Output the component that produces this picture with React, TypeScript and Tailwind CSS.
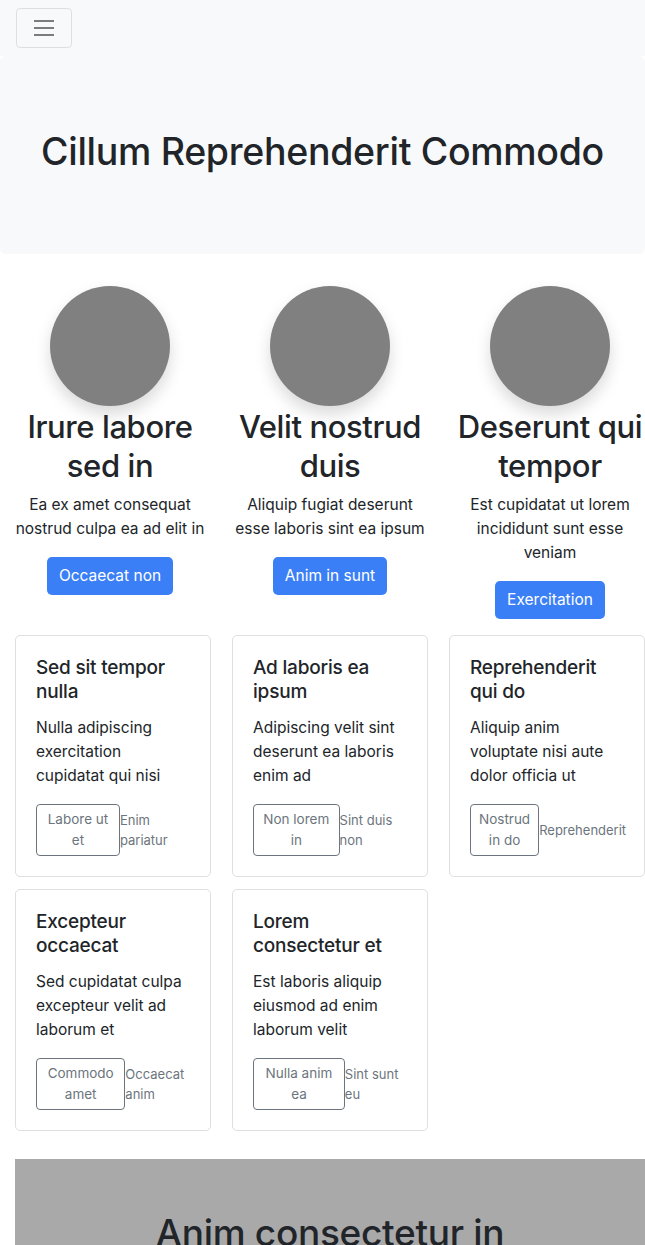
import React from "react";

const features = [
  { title: "Irure labore sed in", text: "Ea ex amet consequat nostrud culpa ea ad elit in", btn: "Occaecat non" },
  { title: "Velit nostrud duis", text: "Aliquip fugiat deserunt esse laboris sint ea ipsum", btn: "Anim in sunt" },
  { title: "Deserunt qui tempor", text: "Est cupidatat ut lorem incididunt sunt esse veniam", btn: "Exercitation" },
];

const cards = [
  { title: "Sed sit tempor nulla", text: "Nulla adipiscing exercitation cupidatat qui nisi", btn: "Labore ut et", small: "Enim pariatur" },
  { title: "Ad laboris ea ipsum", text: "Adipiscing velit sint deserunt ea laboris enim ad", btn: "Non lorem in", small: "Sint duis non" },
  { title: "Reprehenderit qui do", text: "Aliquip anim voluptate nisi aute dolor officia ut", btn: "Nostrud in do", small: "Reprehenderit" },
  { title: "Excepteur occaecat", text: "Sed cupidatat culpa excepteur velit ad laborum et", btn: "Commodo amet", small: "Occaecat anim" },
  { title: "Lorem consectetur et", text: "Est laboris aliquip eiusmod ad enim laborum velit", btn: "Nulla anim ea", small: "Sint sunt eu" },
];

export default function App() {
  return (
    <div
      className="w-[645px] overflow-hidden bg-white text-[#212529]"
      style={{ fontFamily: "Inter, 'Noto Sans', sans-serif" }}
    >
      <nav className="h-[56px] bg-[#f8f9fa] px-4 py-2">
        <button className="flex h-10 w-14 items-center justify-center rounded-[4px] border border-[rgba(0,0,0,0.1)]">
          <svg width="20" height="18" viewBox="0 0 20 18">
            <path d="M0 2h20M0 9h20M0 16h20" stroke="#7b7c7e" strokeWidth="2" />
          </svg>
        </button>
      </nav>

      <section className="flex h-[198px] items-center justify-center rounded-md bg-[#f8f9fa] pb-[6px]">
        <h1 className="text-[37.5px] font-medium leading-[48px] tracking-[-0.3px]">Cillum Reprehenderit Commodo</h1>
      </section>

      <div className="mt-[32px] grid w-[660px] grid-cols-3">
        {features.map((f) => (
          <div key={f.title} className="flex flex-col items-center px-[15px] text-center">
            <div className="h-[120px] w-[120px] rounded-full bg-[#808080] shadow-[0_8px_16px_rgba(0,0,0,0.15)]" />
            <h2 className="mt-[1px] text-[31px] font-medium leading-[39px] tracking-[-0.4px]">{f.title}</h2>
            <p className="mt-2 text-[15.5px] leading-6">{f.text}</p>
            <button className="mt-4 h-[38px] rounded-[5px] bg-[#3a7ff6] px-[12px] text-[15.5px] text-white">
              {f.btn}
            </button>
          </div>
        ))}
      </div>

      <div className="ml-[15px] mt-4 grid w-[630px] grid-cols-3 gap-x-[21px] gap-y-3">
        {cards.map((c) => (
          <div key={c.title} className="rounded-[5px] border border-[rgba(0,0,0,0.125)] p-5">
            <h5 className="text-[19px] font-medium leading-6 tracking-[-0.2px]">{c.title}</h5>
            <p className="mt-3 text-[15.5px] leading-6">{c.text}</p>
            <div className="mt-4 flex items-center justify-between">
              <button className="rounded-[4px] border border-[#6c757d] px-2 py-1 text-[13.5px] leading-[21px] text-[#6c757d]">
                {c.btn}
              </button>
              <small className="text-[13px] leading-5 text-[#6c757d]">{c.small}</small>
            </div>
          </div>
        ))}
      </div>

      <section className="ml-[15px] mt-[28px] w-[630px] bg-[#a9a9a9] pb-12 pt-[50px] text-center">
        <h2 className="text-[37px] font-medium leading-[48px] tracking-[-0.3px]">Anim consectetur in</h2>
        <div className="h-40" />
      </section>
    </div>
  );
}
